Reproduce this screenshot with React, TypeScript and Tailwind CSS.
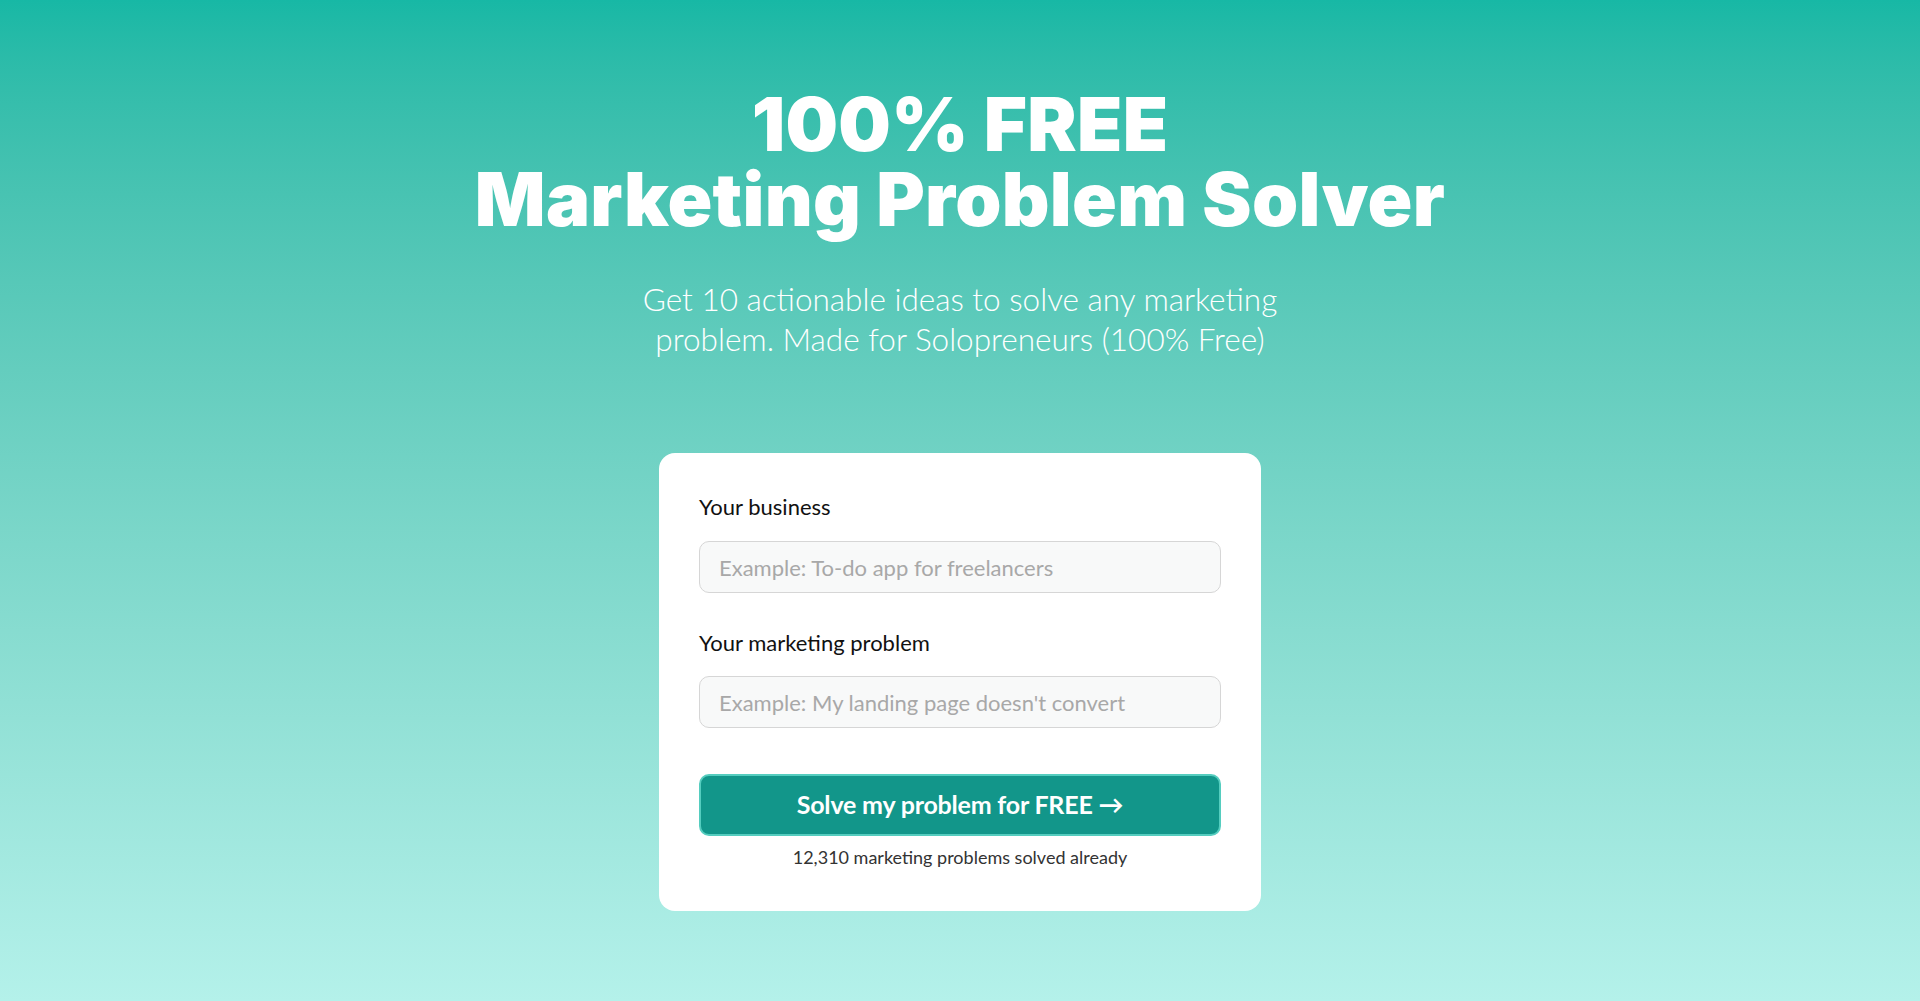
export default function App() {
  return (
    <div className="min-h-screen w-full bg-gradient-to-b from-[#17b8a5] to-[#b4f1ea] flex flex-col items-center pt-[87px] pb-[90px] font-['Lato','Noto_Sans',sans-serif]">
      {/* Hero */}
      <h1 className="text-center text-white font-black text-[74px] leading-[75px] tracking-[0.3px] font-['Inter','Roboto',sans-serif]">
        <span className="block">100% FREE</span>
        <span className="block">Marketing Problem Solver</span>
      </h1>
      <p className="mt-[42px] text-center text-white font-light text-[31.5px] leading-[40px] max-w-[720px]">
        Get 10 actionable ideas to solve any marketing
        <br />
        problem. Made for Solopreneurs (100% Free)
      </p>

      {/* Form card */}
      <div className="mt-[94px] w-[602px] bg-white rounded-[16px] px-[40px] pt-[40px] pb-[43px]">
        <label className="block text-[22px] leading-[28px] text-[#111]">Your business</label>
        <input
          type="text"
          placeholder="Example: To-do app for freelancers"
          className="mt-[20px] block w-full h-[52px] rounded-[10px] border border-[#d6d6d6] bg-[#f8f9f9] px-[19px] text-[22px] text-[#333] placeholder:text-[#a8a8a8] outline-none"
        />

        <label className="mt-[36px] block text-[22px] leading-[28px] text-[#111]">Your marketing problem</label>
        <input
          type="text"
          placeholder="Example: My landing page doesn't convert"
          className="mt-[19px] block w-full h-[52px] rounded-[10px] border border-[#d6d6d6] bg-[#f8f9f9] px-[19px] text-[22px] text-[#333] placeholder:text-[#a8a8a8] outline-none"
        />

        <button className="mt-[46px] w-full h-[62px] rounded-[10px] bg-[#12968a] border-2 border-[#55cdbf] text-white font-bold text-[25px] tracking-[-0.2px]">
          Solve my problem for FREE →
        </button>
        <p className="mt-[10px] text-center text-[18px] leading-[22px] text-[#333]">
          12,310 marketing problems solved already
        </p>
      </div>
    </div>
  );
}
